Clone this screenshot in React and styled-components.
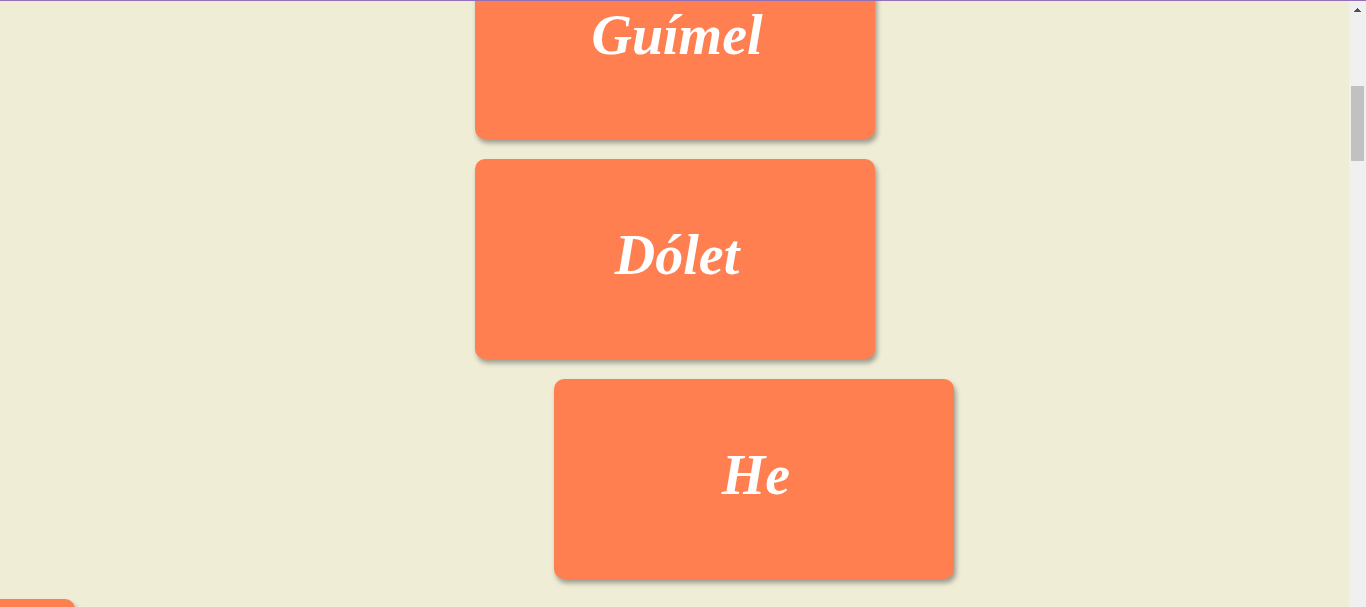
import React from "react";
import styled, { createGlobalStyle } from "styled-components";

const GlobalStyle = createGlobalStyle`
  * {
    box-sizing: border-box;
  }

  body {
    margin: 0;
    background: #efedd6;
    font-family: "Lucida Calligraphy", "Liberation Serif", serif;
  }
`;

const Page = styled.div`
  display: flex;
  height: 100vh;
  overflow: hidden;
  border-top: 1px solid #9370b8;
`;

const Feed = styled.main`
  flex: 1;
  min-width: 0;
  display: flex;
  flex-direction: column;
  align-items: center;
  gap: 20px;
  padding-left: 1px;
  overflow: hidden;
`;

const Card = styled.section`
  flex: none;
  display: flex;
  align-items: center;
  justify-content: center;
  width: 400px;
  height: 200px;
  padding: 0 0 8px 4px;
  border-radius: 10px;
  background: coral;
  box-shadow: 2px 4px 5px rgba(0, 0, 0, 0.35);
  transform: ${({ $shift }) => ($shift ? `translateX(${$shift})` : "none")};

  &:first-child {
    margin-top: -62px;
  }
`;

const Title = styled.h2`
  margin: 0;
  color: #fff;
  font-size: 56px;
  font-style: italic;
  font-weight: bold;
  line-height: 64px;
`;

const Scrollbar = styled.div`
  flex: none;
  display: flex;
  flex-direction: column;
  align-items: center;
  width: 17px;
  background: #f0f0f0;
`;

const ScrollArrow = styled.svg`
  display: block;
  width: 17px;
  height: 17px;
  fill: #505050;
`;

const Thumb = styled.div`
  width: 13px;
  height: 75px;
  margin-top: 68px;
  background: #c1c1c1;
`;

const cards = [
  { id: 3, title: "Guímel" },
  { id: 4, title: "Dólet" },
  { id: 5, title: "He", shift: "79px" },
  { id: 6, shift: "-200%" },
];

export default function App() {
  return (
    <>
      <GlobalStyle />
      <Page>
        <Feed>
          {cards.map(({ id, title, shift }) => (
            <Card key={id} $shift={shift}>
              {title && <Title>{title}</Title>}
            </Card>
          ))}
        </Feed>
        <Scrollbar aria-hidden="true">
          <ScrollArrow viewBox="0 0 17 17" shapeRendering="crispEdges">
            <path d="M8 7h1v1h1v1h1v1h1v1H5v-1h1V9h1V8h1z" />
          </ScrollArrow>
          <Thumb />
        </Scrollbar>
      </Page>
    </>
  );
}
